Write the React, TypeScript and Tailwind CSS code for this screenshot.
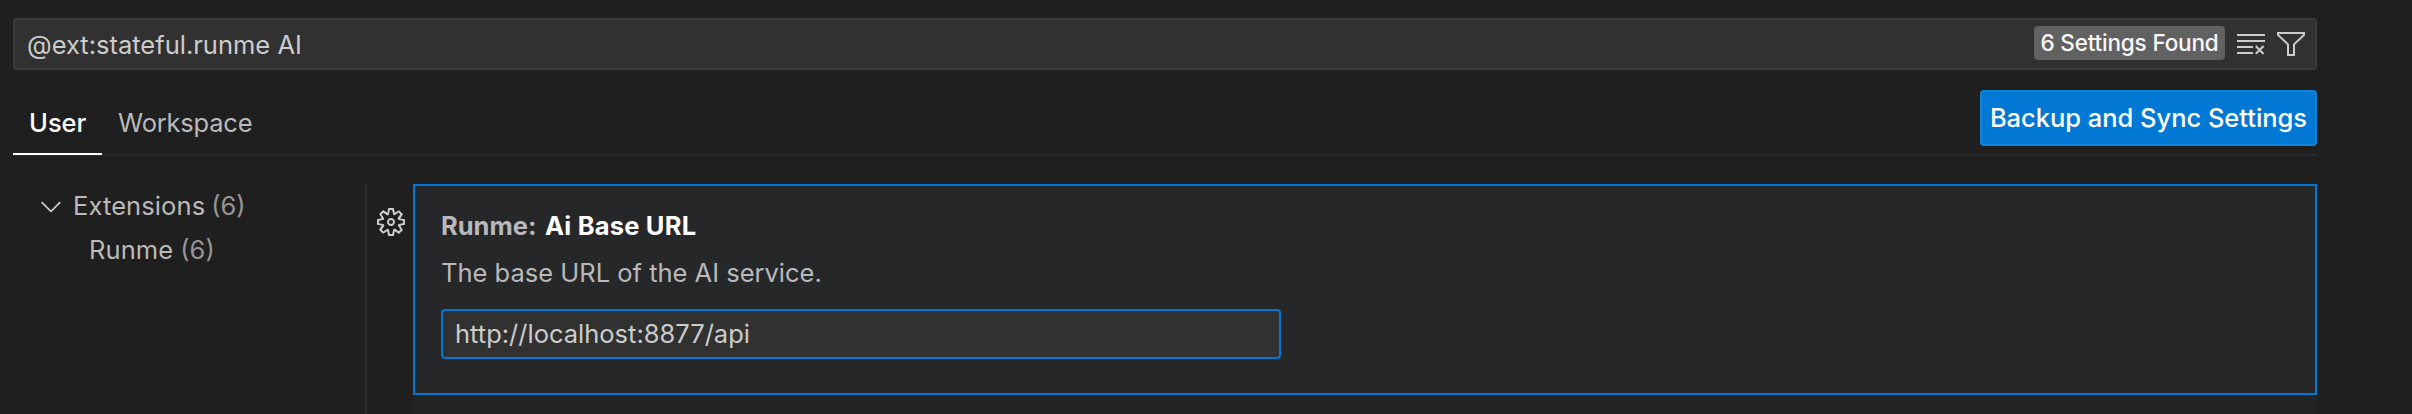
import type { ReactNode } from "react";
import { VscChevronDown, VscClearAll, VscFilter, VscGear } from "react-icons/vsc";

function SearchBar() {
  return (
    <div className="flex h-[52px] items-center rounded-[4px] border-2 border-[#3c3c3c] bg-[#313131] pl-[12px] pr-[8px]">
      <span className="flex-1 pt-px leading-[32px] text-[#cccccc]">@ext:stateful.runme AI</span>
      <span className="mb-[2px] flex h-[34px] w-[191px] items-center justify-center rounded-[4px] bg-[#616161] text-[22.5px] font-medium tracking-[-0.18px] text-[#f8f8f8]">
        6 Settings Found
      </span>
      <VscClearAll className="ml-[10px] size-[32px] text-[#cccccc]" />
      <VscFilter className="ml-[8px] size-[32px] text-[#cccccc]" />
    </div>
  );
}

function ScopeTabs() {
  return (
    <div className="mt-[18px] flex h-[68px] items-start justify-between border-b-2 border-[#2b2b2b]">
      <div className="flex">
        <button className="flex h-[67px] w-[89px] items-center border-b-2 border-white pl-[16px] pt-[4px] font-medium text-white">
          User
        </button>
        <button className="flex h-[67px] items-center pl-[16px] pt-[2px] tracking-[-0.2px] text-[#bababa]">
          Workspace
        </button>
      </div>
      <button className="mt-[2px] flex h-[56px] w-[337px] items-center justify-center rounded-[4px] border-2 border-[#1281d7] bg-[#0078d4] font-medium tracking-[-0.03px] whitespace-nowrap text-white">
        Backup and Sync Settings
      </button>
    </div>
  );
}

function Count({ children }: { children: ReactNode }) {
  return <span className="text-[#969696]">{children}</span>;
}

function Sidebar() {
  return (
    <nav className="w-[354px] border-r-2 border-[#2b2b2b] text-[#bababa]">
      <div className="flex h-[44px] items-center pl-[22px]">
        <VscChevronDown className="mr-[6px] size-[32px] text-[#cccccc]" />
        <span className="mr-[6px] tracking-[0.1px]">Extensions</span>
        <Count>(6)</Count>
      </div>
      <div className="flex h-[44px] items-center pl-[76px]">
        <span className="mr-[7px] tracking-[0.1px]">Runme</span>
        <Count>(6)</Count>
      </div>
    </nav>
  );
}

function SettingCard() {
  return (
    <section className="h-[211px] border-2 border-[#0078d4] bg-[#262729] pl-[26px] pt-[24px]">
      <h2 className="flex h-[32px] items-center font-bold">
        <span className="mr-[8.5px] text-[#b9b9bb]">Runme:</span>
        <span className="tracking-[0.2px] text-white">Ai Base URL</span>
      </h2>
      <p className="mt-[15px] h-[32px] leading-[32px] text-[#b9b9bb]">The base URL of the AI service.</p>
      <div className="mt-[20px] flex h-[50px] w-[840px] items-center rounded-[4px] border-2 border-[#0078d4] bg-[#313131] pl-[12px] text-[#cccccc]">
        http://localhost:8877/api
      </div>
    </section>
  );
}

export default function App() {
  return (
    <div className="flex h-[414px] w-[2412px] flex-col overflow-hidden bg-[#1f1f1f] pl-[13px] pr-[95px] pt-[18px] font-['Inter',sans-serif] text-[25.5px] leading-[32px]">
      <SearchBar />
      <ScopeTabs />
      <main className="mt-[28px] flex flex-1">
        <Sidebar />
        <div className="w-[46px] pl-[8px] pt-[22px]">
          <VscGear className="size-[32px] text-[#cccccc]" />
        </div>
        <div className="flex-1 bg-[#222423]">
          <SettingCard />
        </div>
      </main>
    </div>
  );
}
